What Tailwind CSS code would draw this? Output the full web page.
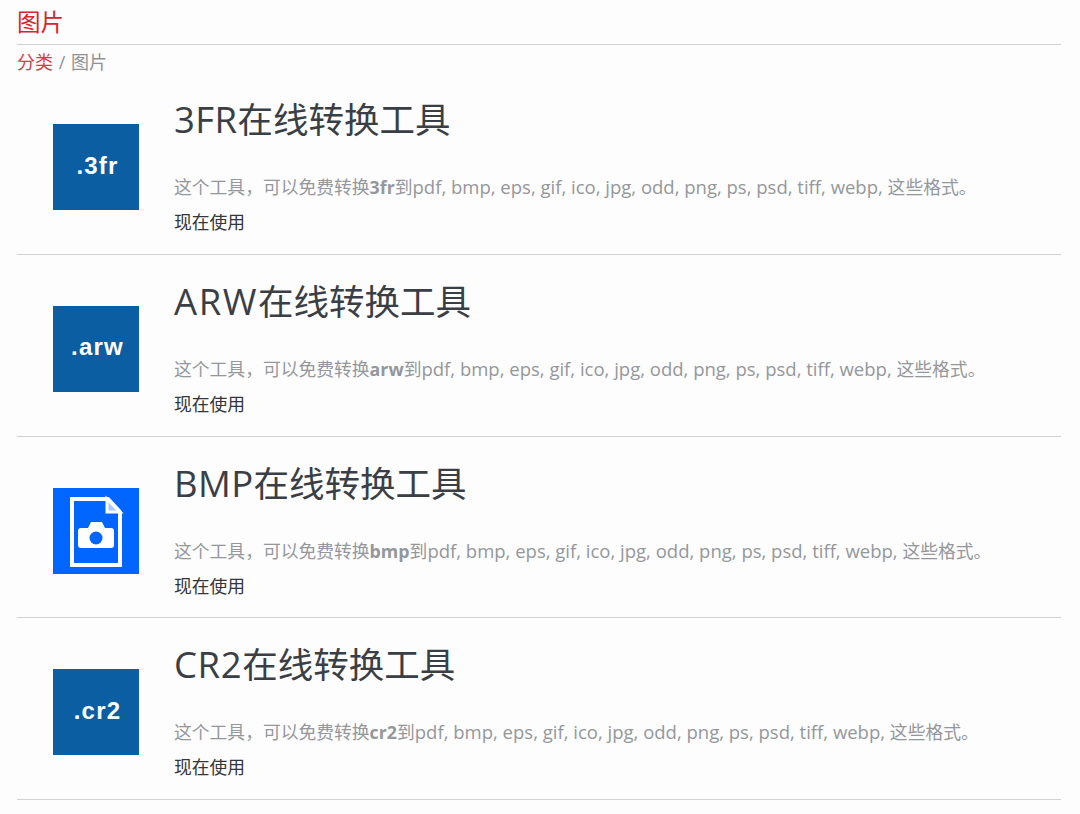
<!DOCTYPE html>
<html lang="zh">
<head>
    <meta charset="UTF-8" />
    <title>图片</title>
    <script src="https://cdn.jsdelivr.net/npm/@tailwindcss/browser@4"></script>
</head>
<body class="bg-[#fdfdfd] font-['Open_Sans','Noto_Sans_CJK_SC',sans-serif] [font-kerning:none] overflow-hidden">
    <div class="pl-[17px] pr-[19px]">
        <h1 class="h-[45px] pt-[5px] text-[23.5px] leading-[34px] text-[#d9232d] border-b border-[#d2d2d2]">图片</h1>
        <div class="h-[28.2px] pt-[4px] text-[18px] leading-[27px] text-[#8f9296]"><a class="text-[#d9384a]">分类</a> <span class="mx-[1px]">/</span> 图片</div>

        <div class="h-[181.7px] flex border-b border-[#d2d2d2]">
            <div class="w-[157px] pl-[36px] pt-[51px] shrink-0">
                <div class="w-[86px] h-[86px] bg-[#0b5ea1] flex items-center justify-center text-white font-['Liberation_Sans',sans-serif] font-bold text-[24px] tracking-[1.2px] pl-[3px] pb-[3px]">.3fr</div>
            </div>
            <div>
                <h2 class="text-[35.5px] leading-[48px] text-[#3a3e45] mt-[22px]"><span class="text-[36.5px] tracking-[0.4px]">3FR</span>在线转换工具</h2>
                <p class="text-[17.8px] leading-[27px] text-[#94979b] mt-[30px]">这个工具，可以免费转换<b>3fr</b>到<span class="text-[18.5px]">pdf, bmp, eps, gif, ico, jpg, odd, png, ps, psd, tiff, webp, </span>这些格式。</p>
                <a class="block text-[17.8px] leading-[27px] text-[#33363a] mt-[8px]">现在使用</a>
            </div>
        </div>

        <div class="h-[181.7px] flex border-b border-[#d2d2d2]">
            <div class="w-[157px] pl-[36px] pt-[51px] shrink-0">
                <div class="w-[86px] h-[86px] bg-[#0b5ea1] flex items-center justify-center text-white font-['Liberation_Sans',sans-serif] font-bold text-[24px] tracking-[1.2px] pl-[3px] pb-[3px]">.arw</div>
            </div>
            <div>
                <h2 class="text-[35.5px] leading-[48px] text-[#3a3e45] mt-[22px]"><span class="text-[36.5px] tracking-[1.6px]">ARW</span>在线转换工具</h2>
                <p class="text-[17.8px] leading-[27px] text-[#94979b] mt-[30px]">这个工具，可以免费转换<b>arw</b>到<span class="text-[18.5px]">pdf, bmp, eps, gif, ico, jpg, odd, png, ps, psd, tiff, webp, </span>这些格式。</p>
                <a class="block text-[17.8px] leading-[27px] text-[#33363a] mt-[8px]">现在使用</a>
            </div>
        </div>

        <div class="h-[181.7px] flex border-b border-[#d2d2d2]">
            <div class="w-[157px] pl-[36px] pt-[51px] shrink-0">
                <div class="w-[86px] h-[86px] bg-[#0066ff]">
                    <svg viewBox="0 0 86 86" class="w-[86px] h-[86px]">
                        <path d="M19 11H55L67 24V77H19Z" fill="none" stroke="#fff" stroke-width="4"/>
                        <path d="M54 11V24H67Z" fill="#a8c9ff" stroke="#fff" stroke-width="3"/>
                        <path d="M32 40H35L38 34H49L52 40H58A3 3 0 0 1 61 43V57A3 3 0 0 1 58 60H28A3 3 0 0 1 25 57V43A3 3 0 0 1 28 40Z" fill="#fff"/>
                        <circle cx="43" cy="50" r="6.5" fill="#0066ff"/>
                    </svg>
                </div>
            </div>
            <div>
                <h2 class="text-[35.5px] leading-[48px] text-[#3a3e45] mt-[22px]"><span class="text-[36.5px] tracking-[0.4px]">BMP</span>在线转换工具</h2>
                <p class="text-[17.8px] leading-[27px] text-[#94979b] mt-[30px]">这个工具，可以免费转换<b>bmp</b>到<span class="text-[18.5px]">pdf, bmp, eps, gif, ico, jpg, odd, png, ps, psd, tiff, webp, </span>这些格式。</p>
                <a class="block text-[17.8px] leading-[27px] text-[#33363a] mt-[8px]">现在使用</a>
            </div>
        </div>

        <div class="h-[181.7px] flex border-b border-[#d2d2d2]">
            <div class="w-[157px] pl-[36px] pt-[51px] shrink-0">
                <div class="w-[86px] h-[86px] bg-[#0b5ea1] flex items-center justify-center text-white font-['Liberation_Sans',sans-serif] font-bold text-[24px] tracking-[1.2px] pl-[3px] pb-[3px]">.cr2</div>
            </div>
            <div>
                <h2 class="text-[35.5px] leading-[48px] text-[#3a3e45] mt-[22px]"><span class="text-[36.5px] tracking-[0.6px]">CR2</span>在线转换工具</h2>
                <p class="text-[17.8px] leading-[27px] text-[#94979b] mt-[30px]">这个工具，可以免费转换<b>cr2</b>到<span class="text-[18.5px]">pdf, bmp, eps, gif, ico, jpg, odd, png, ps, psd, tiff, webp, </span>这些格式。</p>
                <a class="block text-[17.8px] leading-[27px] text-[#33363a] mt-[8px]">现在使用</a>
            </div>
        </div>
    </div>
</body>
</html>
